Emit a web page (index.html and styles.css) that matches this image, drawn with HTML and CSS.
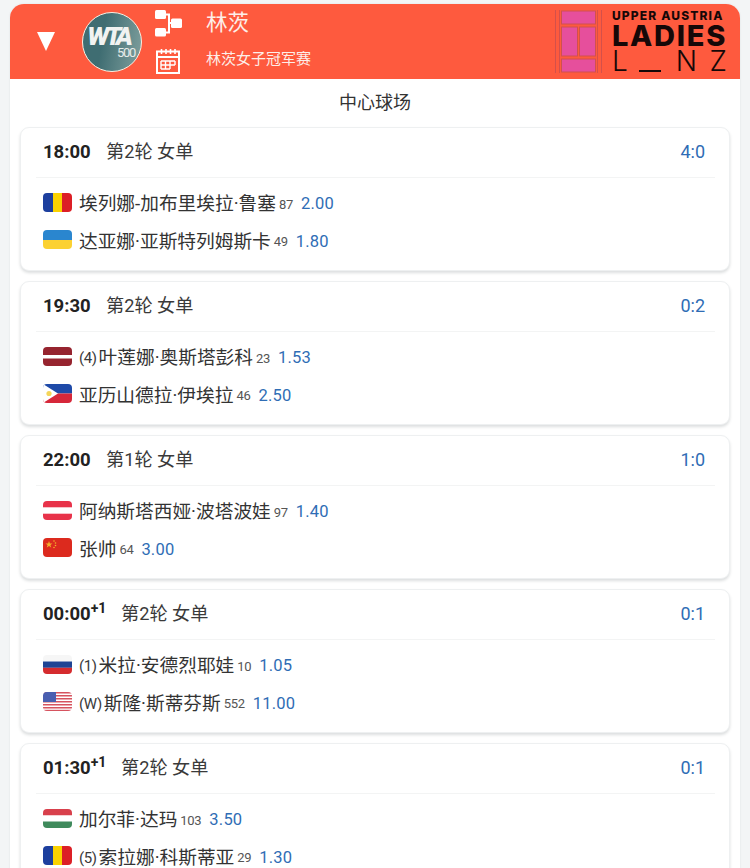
FILE: index.html
```html
<!DOCTYPE html>
<html lang="zh">
<head>
<meta charset="utf-8">
<title>林茨</title>
<link rel="stylesheet" href="styles.css">
</head>
<body>
<svg class="defs" width="0" height="0" aria-hidden="true">
  <defs>
    <symbol id="ro" viewBox="0 0 29 19"><rect width="10" height="19" fill="#1d3f9e"/><rect x="10" width="9" height="19" fill="#fad201"/><rect x="19" width="10" height="19" fill="#dc1f26"/></symbol>
    <symbol id="ua" viewBox="0 0 29 19"><rect width="29" height="10" fill="#2a86cf"/><rect y="10" width="29" height="9" fill="#fbd132"/></symbol>
    <symbol id="lv" viewBox="0 0 29 19"><rect width="29" height="19" fill="#96242f"/><rect y="8" width="29" height="3.5" fill="#fff"/></symbol>
    <symbol id="ph" viewBox="0 0 29 19"><rect width="29" height="9.5" fill="#1e4aa8"/><rect y="9.5" width="29" height="9.5" fill="#d6273a"/><path d="M0 0 L15 9.5 L0 19Z" fill="#fff"/><circle cx="6" cy="9.5" r="2.6" fill="#f4d55b"/></symbol>
    <symbol id="at" viewBox="0 0 29 19"><rect width="29" height="19" fill="#e8334a"/><rect y="6.3" width="29" height="6.4" fill="#fff"/></symbol>
    <symbol id="cn" viewBox="0 0 29 19"><rect width="29" height="19" fill="#dc2a1e"/><path d="M6 3l.9 2.500H9.500L7.400 7l.8 2.500L6 8l-2.200 1.500L4.600 7 2.500 5.500h2.600z" fill="#f3b02c"/><circle cx="11" cy="3" r=".8" fill="#f3b02c"/><circle cx="12.500" cy="5" r=".8" fill="#f3b02c"/><circle cx="12.500" cy="7.500" r=".8" fill="#f3b02c"/><circle cx="11" cy="9.500" r=".8" fill="#f3b02c"/></symbol>
    <symbol id="ru" viewBox="0 0 29 19"><rect width="29" height="6.500" fill="#f6f6f6"/><rect y="6.500" width="29" height="6.300" fill="#1e4494"/><rect y="12.800" width="29" height="6.200" fill="#d52b2e"/></symbol>
    <symbol id="us" viewBox="0 0 29 19"><rect width="29" height="19" fill="#fff"/><g fill="#d6535f"><rect width="29" height="1.500"/><rect y="3" width="29" height="1.500"/><rect y="6" width="29" height="1.500"/><rect y="9" width="29" height="1.500"/><rect y="12" width="29" height="1.500"/><rect y="15" width="29" height="1.500"/><rect y="17.800" width="29" height="1.200"/></g><rect width="13" height="10" fill="#4a5fb0"/></symbol>
    <symbol id="hu" viewBox="0 0 29 19"><rect width="29" height="6.500" fill="#d8404c"/><rect y="6.500" width="29" height="6" fill="#fff"/><rect y="12.500" width="29" height="6.500" fill="#3f8a5c"/></symbol>
  </defs>
</svg>
<main class="panel">
  <header class="head">
    <span class="caret"></span>
    <div class="badge">
      <span class="badge-wta">WTA</span>
      <span class="badge-num">500</span>
    </div>
    <div class="tools">
      <svg class="tool" width="28" height="27" viewBox="0 0 28 27" fill="none" aria-hidden="true">
        <rect x="1" y="0" width="11" height="9" rx="1.500" fill="#fff"/>
        <rect x="1" y="18" width="11" height="8.500" rx="1.500" fill="#fff"/>
        <rect x="17" y="8.500" width="11" height="9.500" rx="1.500" fill="#fff"/>
        <path d="M12 4.500h3v18h-3M15 13h2" stroke="#fff" stroke-width="2"/>
      </svg>
      <svg class="tool" width="26" height="26" viewBox="0 0 26 26" fill="none" stroke="#fff" aria-hidden="true">
        <rect x="3" y="3.500" width="22" height="21.500" stroke-width="2"/>
        <path d="M3 9h22" stroke-width="2"/>
        <path d="M7.500 1v5M12 1v5M16.500 1v5M21 1v5" stroke-width="1.600"/>
        <path d="M7 13h14M7 17h14M7 21h9M7 13v8M11.500 13v8M16 13v8M21 13v4" stroke-width="1.400"/>
      </svg>
    </div>
    <div class="titles">
      <div class="title">林茨</div>
      <div class="subtitle">林茨女子冠军赛</div>
    </div>
    <div class="brand">
      <svg class="brand-mark" width="47" height="63" viewBox="0 0 47 63" aria-hidden="true">
        <g fill="#e64f9c" stroke="#d0504e" stroke-width="1">
          <rect x="6.500" y="1" width="34" height="13"/>
          <rect x="6.500" y="17" width="16" height="29"/>
          <rect x="24.500" y="17" width="16" height="29"/>
          <rect x="6.500" y="49" width="34" height="13"/>
        </g>
        <path d="M.5 0v63M4.500 0v63M42.500 0v63M46.500 0v63" stroke="#d4504a" stroke-width="1" fill="none"/>
      </svg>
      <div class="brand-text">
        <div class="brand-top">UPPER AUSTRIA</div>
        <div class="brand-main">LADIES</div>
        <div class="brand-city"><span>L</span><span class="dash"></span><span>N</span><span>Z</span></div>
      </div>
    </div>
  </header>
  <div class="court">中心球场</div>
  <section class="list">
    <article class="card">
      <div class="meta"><b class="time">18:00</b><span class="round">第2轮 女单</span><span class="score">4:0</span></div>
      <div class="rows">
        <div class="row"><svg class="flag"><use href="#ro"/></svg><span class="name">埃列娜-加布里埃拉·鲁塞</span><span class="rank">87</span><span class="odds">2.00</span></div>
        <div class="row"><svg class="flag"><use href="#ua"/></svg><span class="name">达亚娜·亚斯特列姆斯卡</span><span class="rank">49</span><span class="odds">1.80</span></div>
      </div>
    </article>
    <article class="card">
      <div class="meta"><b class="time">19:30</b><span class="round">第2轮 女单</span><span class="score">0:2</span></div>
      <div class="rows">
        <div class="row"><svg class="flag"><use href="#lv"/></svg><span class="seed">(4)</span><span class="name">叶莲娜·奥斯塔彭科</span><span class="rank">23</span><span class="odds">1.53</span></div>
        <div class="row"><svg class="flag"><use href="#ph"/></svg><span class="name">亚历山德拉·伊埃拉</span><span class="rank">46</span><span class="odds">2.50</span></div>
      </div>
    </article>
    <article class="card">
      <div class="meta"><b class="time">22:00</b><span class="round">第1轮 女单</span><span class="score">1:0</span></div>
      <div class="rows">
        <div class="row"><svg class="flag"><use href="#at"/></svg><span class="name">阿纳斯塔西娅·波塔波娃</span><span class="rank">97</span><span class="odds">1.40</span></div>
        <div class="row"><svg class="flag"><use href="#cn"/></svg><span class="name">张帅</span><span class="rank">64</span><span class="odds">3.00</span></div>
      </div>
    </article>
    <article class="card">
      <div class="meta"><b class="time">00:00<sup>+1</sup></b><span class="round">第2轮 女单</span><span class="score">0:1</span></div>
      <div class="rows">
        <div class="row"><svg class="flag"><use href="#ru"/></svg><span class="seed">(1)</span><span class="name">米拉·安德烈耶娃</span><span class="rank">10</span><span class="odds">1.05</span></div>
        <div class="row"><svg class="flag"><use href="#us"/></svg><span class="seed">(W)</span><span class="name">斯隆·斯蒂芬斯</span><span class="rank">552</span><span class="odds">11.00</span></div>
      </div>
    </article>
    <article class="card">
      <div class="meta"><b class="time">01:30<sup>+1</sup></b><span class="round">第2轮 女单</span><span class="score">0:1</span></div>
      <div class="rows">
        <div class="row"><svg class="flag"><use href="#hu"/></svg><span class="name">加尔菲·达玛</span><span class="rank">103</span><span class="odds">3.50</span></div>
        <div class="row"><svg class="flag"><use href="#ro"/></svg><span class="seed">(5)</span><span class="name">索拉娜·科斯蒂亚</span><span class="rank">29</span><span class="odds">1.30</span></div>
      </div>
    </article>
  </section>
</main>
</body>
</html>
```
FILE: styles.css
```css
* { box-sizing: border-box; }
html, body { margin: 0; height: 868px; overflow: hidden; }
body {
  background: #f3f5f6;
  padding: 4px 10px 0;
  font-family: Roboto, "Noto Sans CJK SC", sans-serif;
  color: #2a2a2a;
}
.defs { position: absolute; }
.panel {
  background: #fff;
  border-radius: 14px 14px 0 0;
  min-height: 900px;
  box-shadow: 0 0 2px rgba(60, 70, 80, .12);
}
.head {
  height: 75px;
  background: #fe5a3e;
  border-radius: 14px 14px 0 0;
  display: flex;
  align-items: center;
  padding-left: 27px;
  color: #fff;
}
.caret {
  width: 0;
  height: 0;
  border-left: 9.5px solid transparent;
  border-right: 9.5px solid transparent;
  border-top: 19px solid #fff;
}
.badge {
  width: 60px;
  height: 60px;
  margin-left: 27px;
  border-radius: 50%;
  border: 1.5px solid #f5f1e4;
  background: linear-gradient(100deg, #3f6d72 35%, #80a09e);
  display: flex;
  flex-direction: column;
  align-items: flex-end;
  padding: 12px 5px 0 0;
  line-height: 1;
}
.badge-wta {
  font: italic 900 26px/22px Roboto, sans-serif;
  letter-spacing: -4px;
  padding-right: 7px;
  color: #f1f3f1;
}
.badge-num { font-size: 13px; line-height: 11px; letter-spacing: -1.300px; padding-right: 1px; color: #e6ecea; }
.tools {
  display: flex;
  flex-direction: column;
  gap: 11px;
  margin-left: 12px;
}
.tool { display: block; }
.titles { margin-left: 24px; flex: 1; align-self: flex-start; }
.title { font-size: 21.500px; line-height: 26px; margin-top: 6px; color: #fdeee9; }
.subtitle { font-size: 15px; line-height: 20px; margin-top: 13px; color: #fdeee9; }
.brand {
  display: flex;
  align-self: flex-start;
  margin: 6px 13px 0 0;
  gap: 10px;
  height: 63px;
}
.brand-mark { display: block; }
.brand-text { width: 115px; color: #160808; font-family: Inter, sans-serif; }
.brand-top { font-size: 12px; font-weight: 800; line-height: 11px; letter-spacing: 1.150px; white-space: nowrap; }
.brand-main { font-size: 29px; font-weight: 800; line-height: 24px; letter-spacing: 1.700px; margin-top: 3px; white-space: nowrap; }
.brand-city {
  display: flex;
  justify-content: space-between;
  align-items: flex-end;
  font-size: 28px;
  font-weight: 300;
  line-height: 25px;
  margin-top: 1px;
}
.dash { width: 22px; height: 2px; background: #160808; margin: 0 2px 2px -1px; }
.court {
  height: 48px;
  text-align: center;
  font-size: 18px;
  line-height: 48px;
  color: #333;
}
.list {
  display: flex;
  flex-direction: column;
  gap: 10px;
  padding: 0 10px;
}
.card {
  height: 144px;
  background: #fff;
  border-radius: 9px;
  border: 1px solid #eef0f1;
  box-shadow: 0 2px 3px rgba(60, 70, 80, .18);
  padding: 0 14px 0 15px;
}
.meta {
  height: 50px;
  display: flex;
  align-items: center;
  border-bottom: 1px solid #f3f4f4;
  padding: 0 10px 2px 7px;
  font-size: 18px;
}
.time { font-size: 18.500px; font-weight: 700; color: #222; width: 63px; white-space: nowrap; }
.time sup { font-size: 14px; line-height: 0; vertical-align: 7px; }
.time:has(sup) { width: 78px; }
.round { font-size: 18.200px; color: #3a3a3a; margin-top: -3px; }
.score { margin-left: auto; color: #2f6db5; }
.rows {
  display: flex;
  flex-direction: column;
  gap: 7.500px;
  padding: 10px 0 0 7px;
}
.row { display: flex; align-items: center; height: 30px; font-size: 18.700px; line-height: 22px; color: #333; white-space: nowrap; }
.flag { width: 29px; height: 19px; border-radius: 4px; flex: none; margin-right: 7px; overflow: hidden; margin-top: -2px; }
.name { margin-top: 2px; }
.seed { font-size: 15px; letter-spacing: -.4px; margin: 2px 2px 0 0; color: #3a3a3a; }
.rank { font-size: 13px; letter-spacing: -.3px; margin: 3px 0 0 3px; color: #555; }
.odds { font-size: 16.500px; margin: 2px 0 0 8px; color: #2f6db5; letter-spacing: .2px; }
```
